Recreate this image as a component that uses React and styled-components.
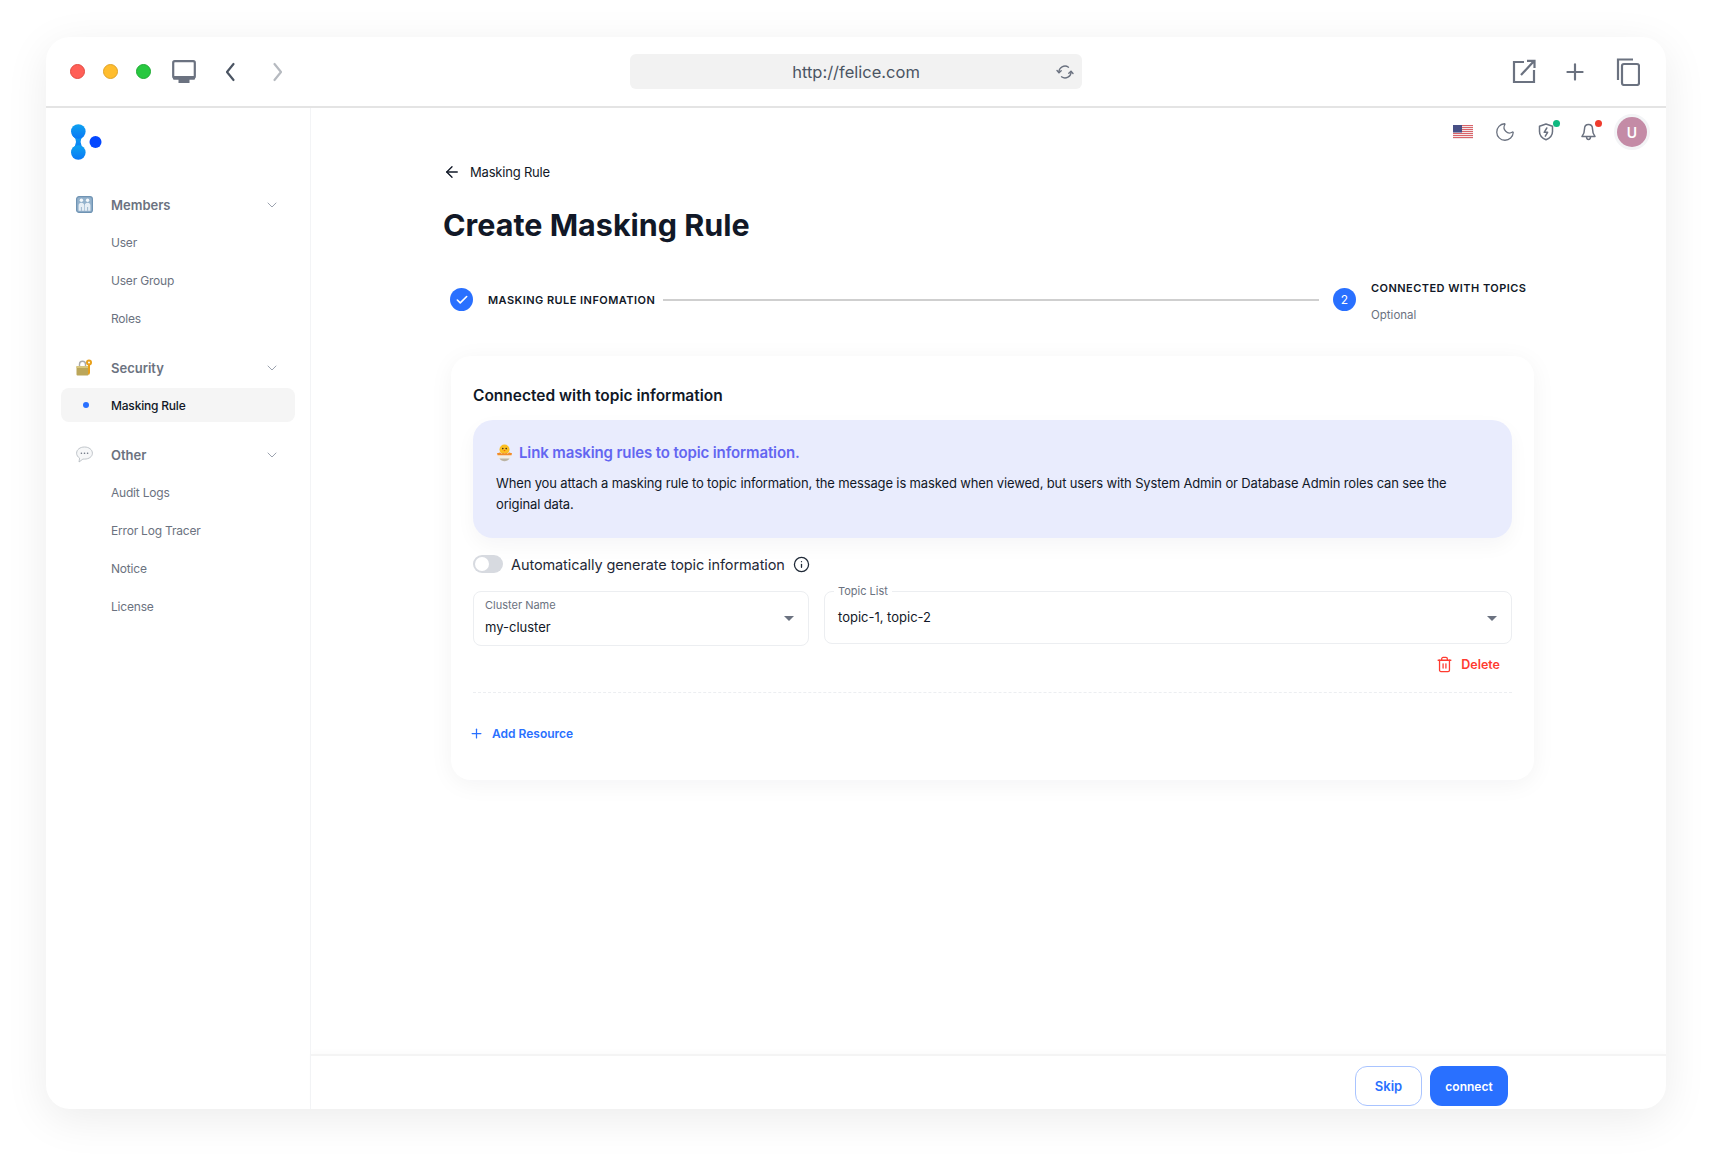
import React from 'react';
import styled, { createGlobalStyle } from 'styled-components';
import { ChevronDown, Info, Moon, Plus, Trash2, ArrowLeft, Check } from 'lucide-react';

const GlobalStyle = createGlobalStyle`
  html, body {
    margin: 0;
    background: #ffffff;
  }

  * {
    box-sizing: border-box;
  }

  body {
    font-family: Inter, "Noto Sans", sans-serif;
    color: #111827;
  }
`;

const menu = [
  { key: 'members', title: 'Members', items: ['User', 'User Group', 'Roles'] },
  { key: 'security', title: 'Security', items: ['Masking Rule'] },
  { key: 'other', title: 'Other', items: ['Audit Logs', 'Error Log Tracer', 'Notice', 'License'] },
];

function MenuIcon({ name }) {
  if (name === 'members') {
    return (
      <svg width="17" height="17" viewBox="0 0 17 17">
        <rect x="0.6" y="0.6" width="15.8" height="15.8" rx="2.5" fill="#94b2cc" stroke="#6f93b3" strokeWidth="1.2" />
        <circle cx="5.4" cy="4.3" r="1.7" fill="#f4f8fb" />
        <circle cx="11.6" cy="4.3" r="1.7" fill="#f4f8fb" />
        <path d="M2.6 14.800V9.500c0-1.800 1.200-2.700 2.800-2.700s2.800.9 2.800 2.700v5.300zM8.800 14.800V9.500c0-1.800 1.200-2.700 2.800-2.700s2.800.9 2.800 2.700v5.300z" fill="#e6eef5" />
        <path d="M5.400 11v3.800M11.600 11v3.800" stroke="#8aa9c4" strokeWidth="0.8" />
      </svg>
    );
  }
  if (name === 'security') {
    return (
      <svg width="17" height="17" viewBox="0 0 17 17">
        <path d="M3.500 8V5.200a3 3 0 0 1 6 0V8" fill="none" stroke="#a9a9a9" strokeWidth="1.400" />
        <rect x="0.5" y="7" width="12" height="9.500" rx="1" fill="#bba65a" />
        <rect x="0.5" y="7" width="12" height="2" fill="#d8c67c" />
        <circle cx="13" cy="3.400" r="3" fill="#e8a01c" />
        <circle cx="13" cy="3.400" r="1" fill="#fff" />
        <path d="M12 6h2v8l-1 2-1-1z" fill="#e8a01c" />
      </svg>
    );
  }
  return (
    <svg width="17" height="17" viewBox="0 0 17 17">
      <path d="M8.500 1C4 1 .6 3.600.6 7.200c0 2.100 1.200 3.800 3 4.900L3 16l3.900-2.900h1.600c4.500 0 7.900-2.400 7.900-5.900S13 1 8.500 1z" fill="#f6f7f8" stroke="#b9bec4" strokeWidth="0.9" />
      <circle cx="5.400" cy="7.200" r="0.8" fill="#6b7280" />
      <circle cx="8.500" cy="7.200" r="0.8" fill="#6b7280" />
      <circle cx="11.600" cy="7.200" r="0.8" fill="#6b7280" />
    </svg>
  );
}

function Logo() {
  return (
    <svg width="31" height="36" viewBox="0 0 31 36">
      <defs>
        <linearGradient id="logoStem" x1="0" y1="0" x2="0" y2="1">
          <stop offset="0" stopColor="#0ea2f0" />
          <stop offset="1" stopColor="#0a78f5" />
        </linearGradient>
      </defs>
      <g fill="url(#logoStem)">
        <path d="M1.200 11 Q8.800 18 1.200 25 L13.400 25 Q5.800 18 13.400 11 Z" />
        <circle cx="7.300" cy="7.500" r="7.300" />
        <circle cx="7.300" cy="28.500" r="7.300" />
      </g>
      <circle cx="24.500" cy="18" r="6" fill="#0448ff" />
    </svg>
  );
}

function HatchingChick() {
  return (
    <svg width="17" height="18" viewBox="0 0 16 18">
      <circle cx="8" cy="5.500" r="5" fill="#fbbf24" />
      <path d="M1 9.500c1 .2 2-.6 2.600-.6l1.500 1.100 1.500-1 1.500 1 1.500-1 1.500 1 1.500-1.100c.6 0 1.500.8 2.400.6-.2 4.500-3.200 7.800-7 7.800s-6.800-3.300-7-7.800z" fill="#f3eee4" />
      <path d="M3 14.500c1.200 1.800 3 2.800 5 2.800s3.800-1 5-2.800z" fill="#b9b3a6" />
      <path d="M.6 9c1 .3 2.400-.4 3-.4l1.500 1.100 1.500-1 1.500 1 1.500-1 1.500 1 1.500-1.100c.6 0 2 .7 2.800.4l-.3 2.300H1z" fill="#f28c28" />
      <circle cx="6.300" cy="4.600" r="0.800" fill="#3b2b12" />
      <circle cx="9.700" cy="4.600" r="0.800" fill="#3b2b12" />
      <path d="M6.800 6h2.400L8 7.400z" fill="#ef6c00" />
    </svg>
  );
}

function Flag() {
  return (
    <svg width="20" height="14" viewBox="0 0 20 14">
      <rect width="20" height="14" fill="#f7f7f7" />
      {[0, 2, 4, 6, 8, 10, 12].map((y) => (
        <rect key={y} y={y} width="20" height="1.100" fill="#d9646a" />
      ))}
      <rect width="9" height="7.500" fill="#474f85" />
    </svg>
  );
}

function FieldCaret() {
  return (
    <svg width="10" height="5" viewBox="0 0 10 5">
      <path d="M0 0h10L5 5z" fill="#6b7280" />
    </svg>
  );
}

export default function App() {
  return (
    <>
      <GlobalStyle />
      <Page>
        <Window>
          <Toolbar>
            <ToolbarLeft>
              <Lights>
                <Light $color="#ff5f57" $edge="#e24b41" />
                <Light $color="#ffbd2e" $edge="#e0a328" />
                <Light $color="#28c840" $edge="#1eab33" />
              </Lights>
              <svg width="24" height="23" viewBox="0 0 24 23" fill="none">
                <rect x="1.200" y="1.200" width="21.600" height="16.600" rx="1.500" stroke="#6b7280" strokeWidth="2.200" />
                <path d="M1 16h22v2.800a1 1 0 0 1-1 1h-4.500V23h-11v-3.200H2a1 1 0 0 1-1-1z" fill="#6b7280" />
              </svg>
              <NavArrows>
                <svg width="12" height="20" viewBox="0 0 12 20" fill="none">
                  <path d="M9.500 2L3 10l6.500 8" stroke="#4b5563" strokeWidth="2.200" strokeLinecap="round" strokeLinejoin="round" />
                </svg>
                <svg width="12" height="20" viewBox="0 0 12 20" fill="none">
                  <path d="M2.500 2L9 10l-6.500 8" stroke="#b6bac0" strokeWidth="2.200" strokeLinecap="round" strokeLinejoin="round" />
                </svg>
              </NavArrows>
            </ToolbarLeft>
            <UrlBar>
              <UrlText>http://felice.com</UrlText>
              <UrlReload>
                <svg width="18" height="18" viewBox="0 0 18 18" fill="none" stroke="#6b7280" strokeWidth="1.400" strokeLinecap="round" strokeLinejoin="round">
                  <path d="M3 9.500a6 6 0 0 1 9.500-5.300M15 8.500a6 6 0 0 1-9.500 5.300" />
                  <path d="M1 7.500l2 2.300 2.200-2M17 10.500l-2-2.300-2.200 2" />
                </svg>
              </UrlReload>
            </UrlBar>
            <ToolbarRight>
              <svg width="24" height="25" viewBox="0 0 24 25" fill="none" stroke="#6b7280" strokeWidth="2.200">
                <path d="M12 3H2v20h20V11" />
                <path d="M9 16L22 2M15 1.800h7.500V9" />
              </svg>
              <Plus size={26} color="#6b7280" strokeWidth={2} />
              <CopyIcon width="24" height="28" viewBox="0 0 24 28" fill="none" stroke="#6b7280" strokeWidth="2.200">
                <path d="M2 22V1.500h15" />
                <rect x="6" y="6" width="17" height="21" rx="2" />
              </CopyIcon>
            </ToolbarRight>
          </Toolbar>

          <Body>
            <Sidebar>
              <LogoRow>
                <Logo />
              </LogoRow>
              <Nav>
                {menu.map((group) => (
                  <NavGroup key={group.key}>
                    <NavHead>
                      <NavHeadIcon>
                        <MenuIcon name={group.key} />
                      </NavHeadIcon>
                      <NavHeadTitle>{group.title}</NavHeadTitle>
                      <ChevronDown size={16} color="#9ca3af" strokeWidth={1.500} />
                    </NavHead>
                    {group.items.map((item) => (
                      <NavItem key={item} $active={item === 'Masking Rule'}>
                        {item}
                      </NavItem>
                    ))}
                  </NavGroup>
                ))}
              </Nav>
            </Sidebar>

            <Main>
              <TopBar>
                <IconSlot>
                  <Flag />
                </IconSlot>
                <IconSlot>
                  <Moon size={22} color="#6b7280" strokeWidth={1.400} />
                </IconSlot>
                <IconSlot $dot="#10b981">
                  <svg width="16" height="18" viewBox="0 0 16 18" fill="none" stroke="#6b7280" strokeWidth="1.500" strokeLinejoin="round">
                    <path d="M8 1l6.500 2.200v5.300c0 3.800-2.600 6.700-6.500 8.300-3.900-1.600-6.500-4.500-6.500-8.300V3.200z" />
                    <path d="M8.800 5L6.200 9.300h3.400l-2.300 3.900" strokeLinecap="round" />
                  </svg>
                </IconSlot>
                <IconSlot $dot="#ef3b2d">
                  <svg width="15" height="18" viewBox="0 0 15 18" fill="none" stroke="#6b7280" strokeWidth="1.500" strokeLinejoin="round">
                    <path d="M7.500 1.500c-2.600 0-4 2-4 4.500 0 3.500-.8 5.500-2.500 7.500h13c-1.700-2-2.500-4-2.500-7.500 0-2.500-1.400-4.500-4-4.500z" />
                    <path d="M5.500 13.500c0 2 .8 3 2 3s2-1 2-3" />
                  </svg>
                </IconSlot>
                <Avatar>U</Avatar>
              </TopBar>

              <Content>
                <BackLink>
                  <ArrowLeft size={18} color="#111827" strokeWidth={1.800} />
                  Masking Rule
                </BackLink>
                <PageTitle>Create Masking Rule</PageTitle>

                <Stepper>
                  <StepCircle>
                    <Check size={14} color="#fff" strokeWidth={2.800} />
                  </StepCircle>
                  <StepLabel>MASKING RULE INFOMATION</StepLabel>
                  <StepLine />
                  <StepCircle>2</StepCircle>
                  <StepText>
                    <StepLabel>CONNECTED WITH TOPICS</StepLabel>
                    <StepHint>Optional</StepHint>
                  </StepText>
                </Stepper>

                <Card>
                  <CardTitle>Connected with topic information</CardTitle>
                  <Notice>
                    <NoticeTitle>
                      <HatchingChick />
                      Link masking rules to topic information.
                    </NoticeTitle>
                    <NoticeBody>
                      When you attach a masking rule to topic information, the message is masked when viewed, but users with System Admin or Database Admin roles can see the original data.
                    </NoticeBody>
                  </Notice>

                  <ToggleRow>
                    <Toggle>
                      <ToggleThumb />
                    </Toggle>
                    <ToggleLabel>Automatically generate topic information</ToggleLabel>
                    <Info size={17} color="#1f2937" strokeWidth={1.800} />
                  </ToggleRow>

                  <FieldRow>
                    <FilledField>
                      <FilledLabel>Cluster Name</FilledLabel>
                      <FilledValue>my-cluster</FilledValue>
                      <CaretSlot>
                        <FieldCaret />
                      </CaretSlot>
                    </FilledField>
                    <OutlinedField>
                      <FloatingLabel>Topic List</FloatingLabel>
                      <FieldValue>topic-1, topic-2</FieldValue>
                      <CaretSlot>
                        <FieldCaret />
                      </CaretSlot>
                    </OutlinedField>
                  </FieldRow>

                  <DeleteRow>
                    <DeleteButton>
                      <Trash2 size={17} color="#ff3b30" strokeWidth={1.800} />
                      Delete
                    </DeleteButton>
                  </DeleteRow>
                  <DashedLine />
                  <AddButton>
                    <Plus size={15} color="#2970ff" strokeWidth={2} />
                    Add Resource
                  </AddButton>
                </Card>
              </Content>

              <Footer>
                <SkipButton>Skip</SkipButton>
                <ConnectButton>connect</ConnectButton>
              </Footer>
            </Main>
          </Body>
        </Window>
      </Page>
    </>
  );
}

const Page = styled.div`
  height: 1165px;
  padding: 37px 46px 56px;
  overflow: hidden;
`;

const Window = styled.div`
  background: #ffffff;
  border-radius: 24px;
  box-shadow: 0 10px 44px rgba(0, 0, 0, 0.08);
  display: flex;
  flex-direction: column;
  height: 1072px;
  overflow: hidden;
`;

const Toolbar = styled.header`
  align-items: center;
  border-bottom: 2px solid #e4e4e4;
  display: grid;
  flex: none;
  grid-template-columns: 1fr 452px 1fr;
  height: 71px;
`;

const ToolbarLeft = styled.div`
  align-items: center;
  display: flex;
  gap: 21px;
  padding-left: 24px;
`;

const Lights = styled.div`
  display: flex;
  gap: 18px;
`;

const Light = styled.span`
  background: ${(props) => props.$color};
  border: 1px solid ${(props) => props.$edge};
  border-radius: 50%;
  height: 15px;
  width: 15px;
`;

const NavArrows = styled.div`
  align-items: center;
  display: flex;
  gap: 36px;
  margin-left: 7px;
`;

const UrlBar = styled.div`
  align-items: center;
  background: #f2f2f2;
  border-radius: 6px;
  display: flex;
  height: 35px;
  justify-content: center;
  position: relative;
`;

const UrlText = styled.span`
  color: #4b5563;
  font-size: 16.5px;
`;

const UrlReload = styled.span`
  display: flex;
  position: absolute;
  right: 8px;
`;

const ToolbarRight = styled.div`
  align-items: center;
  display: flex;
  gap: 26px;
  justify-content: flex-end;
  padding-right: 26px;
`;

const CopyIcon = styled.svg`
  margin-left: 2px;
`;

const Body = styled.div`
  display: flex;
  flex: 1;
  min-height: 0;
`;

const Sidebar = styled.aside`
  border-right: 1px solid #f3f4f6;
  flex: none;
  padding: 16px 15px 0;
  width: 265px;
`;

const LogoRow = styled.div`
  display: flex;
  height: 35px;
  margin-bottom: 29px;
  padding-left: 10px;
`;

const Nav = styled.nav`
  display: flex;
  flex-direction: column;
  gap: 16px;
`;

const NavGroup = styled.div`
  display: flex;
  flex-direction: column;
  gap: 4px;
`;

const NavHead = styled.div`
  align-items: center;
  display: flex;
  height: 33px;
  padding: 0 15px;
`;

const NavHeadIcon = styled.span`
  display: flex;
  width: 35px;
`;

const NavHeadTitle = styled.span`
  color: #6b7280;
  flex: 1;
  font-size: 13px;
  font-weight: 600;
`;

const NavItem = styled.div`
  align-items: center;
  background: ${(props) => (props.$active ? '#f5f5f5' : 'transparent')};
  border-radius: 8px;
  color: ${(props) => (props.$active ? '#111827' : '#6b7280')};
  display: flex;
  font-size: 12px;
  font-weight: ${(props) => (props.$active ? 500 : 400)};
  height: 34px;
  letter-spacing: -0.2px;
  padding-left: 50px;
  position: relative;

  &::before {
    background: #2970ff;
    border-radius: 50%;
    content: ${(props) => (props.$active ? "''" : 'none')};
    height: 6px;
    left: 22px;
    position: absolute;
    width: 6px;
  }
`;

const Main = styled.main`
  display: flex;
  flex: 1;
  flex-direction: column;
  min-width: 0;
`;

const TopBar = styled.div`
  align-items: center;
  display: flex;
  flex: none;
  height: 48px;
  justify-content: flex-end;
  padding-right: 16px;
`;

const IconSlot = styled.span`
  align-items: center;
  display: flex;
  height: 24px;
  justify-content: center;
  position: relative;
  width: 41.7px;

  &::after {
    background: ${(props) => props.$dot};
    border-radius: 50%;
    content: ${(props) => (props.$dot ? "''" : 'none')};
    height: 7px;
    position: absolute;
    right: 7px;
    top: 0;
    width: 7px;
  }
`;

const Avatar = styled.span`
  align-items: center;
  background: #c48ba6;
  border-radius: 50%;
  box-shadow: 0 0 0 3px #f3f4f6;
  color: #ffffff;
  display: flex;
  font-size: 14px;
  font-weight: 600;
  height: 30px;
  justify-content: center;
  margin: 0 3px 0 8px;
  width: 30px;
`;

const Content = styled.div`
  flex: 1;
  padding: 6px 0 0 132px;
  min-height: 0;
`;

const BackLink = styled.div`
  align-items: center;
  color: #111827;
  display: flex;
  font-size: 13px;
  gap: 9px;
  height: 20px;
  letter-spacing: -0.2px;
`;

const PageTitle = styled.h1`
  color: #111827;
  font-size: 30.5px;
  font-weight: 700;
  line-height: 40px;
  margin: 23px 0 0;
`;

const Stepper = styled.div`
  align-items: center;
  display: flex;
  height: 41px;
  margin: 34px 0 0 7px;
  width: 1084px;
`;

const StepCircle = styled.span`
  align-items: center;
  background: #2970ff;
  border-radius: 50%;
  color: #ffffff;
  display: flex;
  flex: none;
  font-size: 12px;
  height: 23px;
  justify-content: center;
  margin-right: 15px;
  width: 23px;
`;

const StepLabel = styled.span`
  color: #111827;
  font-size: 11px;
  font-weight: 600;
  letter-spacing: 0.45px;
  line-height: 18px;
  white-space: nowrap;
`;

const StepLine = styled.span`
  background: #cfcfcf;
  flex: 1;
  height: 2px;
  margin: 0 14px 0 8px;
`;

const StepText = styled.div`
  display: flex;
  flex-direction: column;
  gap: 9px;
  margin-bottom: -4px;
  width: 163px;
`;

const StepHint = styled.span`
  color: #6b7280;
  font-size: 11.5px;
  line-height: 18px;
`;

const Card = styled.section`
  background: #ffffff;
  border-radius: 20px;
  box-shadow: 0 4px 24px rgba(17, 24, 39, 0.05);
  margin: 36px 0 0 8px;
  padding: 28px 22px 37px;
  width: 1083px;
`;

const CardTitle = styled.h2`
  color: #111827;
  font-size: 15.5px;
  font-weight: 600;
  line-height: 24px;
  margin: 0;
`;

const Notice = styled.div`
  background: #e9ecfd;
  border-radius: 20px;
  box-shadow: 0 8px 20px rgba(17, 24, 39, 0.04);
  margin-top: 12px;
  padding: 21px 23px 23px;
`;

const NoticeTitle = styled.div`
  align-items: center;
  color: #6366f1;
  display: flex;
  font-size: 15px;
  font-weight: 600;
  gap: 6px;
  letter-spacing: -0.12px;
  line-height: 24px;
`;

const NoticeBody = styled.p`
  color: #111827;
  font-size: 13px;
  letter-spacing: -0.14px;
  line-height: 21px;
  margin: 8px 0 0;
`;

const ToggleRow = styled.div`
  align-items: center;
  display: flex;
  height: 18px;
  margin-top: 17px;
`;

const Toggle = styled.span`
  align-items: center;
  background: #d7dae0;
  border-radius: 9px;
  display: flex;
  height: 18px;
  margin-right: 8px;
  padding-left: 2px;
  width: 30px;
`;

const ToggleThumb = styled.span`
  background: #ffffff;
  border-radius: 50%;
  height: 14px;
  width: 14px;
`;

const ToggleLabel = styled.span`
  color: #1f2937;
  font-size: 14.5px;
  letter-spacing: -0.1px;
  margin-right: 8px;
`;

const FieldRow = styled.div`
  align-items: flex-start;
  display: flex;
  gap: 15px;
  margin-top: 18px;
`;

const FilledField = styled.div`
  border: 1.5px solid #eceef1;
  border-radius: 8px;
  flex: none;
  height: 55px;
  padding: 5px 11px;
  position: relative;
  width: 336px;
`;

const FilledLabel = styled.div`
  color: #6b7280;
  font-size: 11px;
  line-height: 16px;
`;

const FilledValue = styled.div`
  color: #111827;
  font-size: 13px;
  line-height: 20px;
  margin-top: 4px;
`;

const OutlinedField = styled.div`
  border: 1.5px solid #eceef1;
  border-radius: 8px;
  flex: 1;
  height: 53px;
  padding: 0 13px;
  position: relative;
`;

const FloatingLabel = styled.span`
  background: #ffffff;
  color: #6b7280;
  font-size: 11px;
  left: 9px;
  line-height: 14px;
  padding: 0 4px;
  position: absolute;
  top: -8px;
`;

const FieldValue = styled.div`
  color: #111827;
  font-size: 13px;
  line-height: 50px;
`;

const CaretSlot = styled.span`
  display: flex;
  position: absolute;
  right: 14px;
  top: 24px;
`;

const DeleteRow = styled.div`
  display: flex;
  justify-content: flex-end;
  margin-top: 8px;
  padding-right: 12px;
`;

const DeleteButton = styled.span`
  align-items: center;
  color: #ff3b30;
  display: flex;
  font-size: 12.5px;
  font-weight: 600;
  gap: 8px;
  height: 20px;
`;

const DashedLine = styled.div`
  border-top: 1px dashed #eceef1;
  margin-top: 18px;
`;

const AddButton = styled.div`
  align-items: center;
  color: #2970ff;
  display: flex;
  font-size: 12px;
  font-weight: 600;
  gap: 8px;
  height: 20px;
  margin: 30px 0 0 -4px;
`;

const Footer = styled.footer`
  border-top: 2px solid #f4f4f4;
  box-shadow: 0 -3px 5px rgba(0, 0, 0, 0.015);
  display: flex;
  flex: none;
  gap: 8px;
  height: 55px;
  justify-content: flex-end;
  padding: 10px 158px 0 0;
`;

const SkipButton = styled.button`
  background: #ffffff;
  border: 1.5px solid #a9c4ff;
  border-radius: 12px;
  color: #2970ff;
  font-family: inherit;
  font-size: 13px;
  font-weight: 600;
  height: 40px;
  width: 67px;
`;

const ConnectButton = styled.button`
  background: #2970ff;
  border: none;
  border-radius: 12px;
  color: #ffffff;
  font-family: inherit;
  font-size: 12px;
  font-weight: 600;
  height: 40px;
  width: 78px;
`;
